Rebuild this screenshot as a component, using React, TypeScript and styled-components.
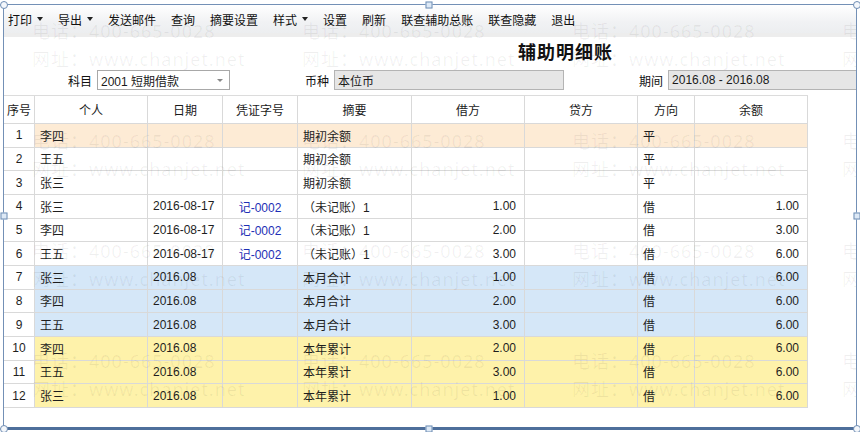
import styled, { createGlobalStyle } from "styled-components";

const GlobalStyle = createGlobalStyle`
  html, body {
    margin: 0;
    padding: 0;
    background: #ffffff;
  }
  body {
    font-family: "Liberation Sans", "Noto Sans CJK SC", sans-serif;
    font-size: 12px;
    color: #1e1e1e;
  }
`;

type Tone = "plain" | "open" | "month" | "year";

interface Line {
  no: number;
  person: string;
  date: string;
  voucher: string;
  summary: string;
  debit: string;
  credit: string;
  dir: string;
  balance: string;
  tone: Tone;
}

const lines: Line[] = [
  { no: 1, person: "李四", date: "", voucher: "", summary: "期初余额", debit: "", credit: "", dir: "平", balance: "", tone: "open" },
  { no: 2, person: "王五", date: "", voucher: "", summary: "期初余额", debit: "", credit: "", dir: "平", balance: "", tone: "plain" },
  { no: 3, person: "张三", date: "", voucher: "", summary: "期初余额", debit: "", credit: "", dir: "平", balance: "", tone: "plain" },
  { no: 4, person: "张三", date: "2016-08-17", voucher: "记-0002", summary: "（未记账）1", debit: "1.00", credit: "", dir: "借", balance: "1.00", tone: "plain" },
  { no: 5, person: "李四", date: "2016-08-17", voucher: "记-0002", summary: "（未记账）1", debit: "2.00", credit: "", dir: "借", balance: "3.00", tone: "plain" },
  { no: 6, person: "王五", date: "2016-08-17", voucher: "记-0002", summary: "（未记账）1", debit: "3.00", credit: "", dir: "借", balance: "6.00", tone: "plain" },
  { no: 7, person: "张三", date: "2016.08", voucher: "", summary: "本月合计", debit: "1.00", credit: "", dir: "借", balance: "6.00", tone: "month" },
  { no: 8, person: "李四", date: "2016.08", voucher: "", summary: "本月合计", debit: "2.00", credit: "", dir: "借", balance: "6.00", tone: "month" },
  { no: 9, person: "王五", date: "2016.08", voucher: "", summary: "本月合计", debit: "3.00", credit: "", dir: "借", balance: "6.00", tone: "month" },
  { no: 10, person: "李四", date: "2016.08", voucher: "", summary: "本年累计", debit: "2.00", credit: "", dir: "借", balance: "6.00", tone: "year" },
  { no: 11, person: "王五", date: "2016.08", voucher: "", summary: "本年累计", debit: "3.00", credit: "", dir: "借", balance: "6.00", tone: "year" },
  { no: 12, person: "张三", date: "2016.08", voucher: "", summary: "本年累计", debit: "1.00", credit: "", dir: "借", balance: "6.00", tone: "year" },
];

const toneBg: Record<Tone, string> = {
  plain: "#ffffff",
  open: "#fdebd5",
  month: "#d5e7f8",
  year: "#fef2aa",
};

const menu: { label: string; drop?: boolean }[] = [
  { label: "打印", drop: true },
  { label: "导出", drop: true },
  { label: "发送邮件" },
  { label: "查询" },
  { label: "摘要设置" },
  { label: "样式", drop: true },
  { label: "设置" },
  { label: "刷新" },
  { label: "联查辅助总账" },
  { label: "联查隐藏" },
  { label: "退出" },
];

const headers = ["序号", "个人", "日期", "凭证字号", "摘要", "借方", "贷方", "方向", "余额"];

const Page = styled.div`
  position: relative;
  width: 860px;
  height: 432px;
  overflow: hidden;
  padding: 4px 0 0 3px;
  box-sizing: border-box;
`;

const Frame = styled.div`
  position: relative;
  width: 854px;
  height: 426px;
  box-sizing: border-box;
  border: 1px solid #7390b6;
  border-bottom: 3px solid #4e6f9b;
  overflow: hidden;
  background: #ffffff;
`;

const Toolbar = styled.div`
  display: flex;
  align-items: center;
  height: 28px;
  padding-left: 4px;
  background: linear-gradient(#ffffff, #f1f2f4 60%, #eceef0);
  border-bottom: 4px solid #ededed;
`;

const MenuItem = styled.div`
  display: flex;
  align-items: center;
  padding-right: 15px;
  font-family: "Noto Sans CJK SC", sans-serif;
  font-size: 12px;
  color: #111;
  white-space: nowrap;
`;

const Caret = styled.span`
  margin-left: 5px;
  width: 0;
  height: 0;
  border-left: 3.5px solid transparent;
  border-right: 3.5px solid transparent;
  border-top: 4px solid #222;
`;

const TitleRow = styled.div`
  height: 29px;
  padding-left: 514px;
  font-family: "Noto Sans CJK SC", sans-serif;
  font-weight: 700;
  font-size: 18px;
  letter-spacing: 1px;
  line-height: 29px;
  color: #111;
`;

const FormRow = styled.div`
  display: flex;
  align-items: center;
  gap: 75px;
  height: 20px;
  padding: 4px 0 5px 64px;
`;

const Field = styled.label`
  display: flex;
  align-items: center;
  gap: 5px;
  font-family: "Noto Sans CJK SC", sans-serif;
  font-size: 12px;
  color: #111;
  white-space: nowrap;
`;

const Box = styled.div<{ $w: number; $disabled?: boolean }>`
  position: relative;
  display: flex;
  align-items: center;
  width: ${(p) => p.$w}px;
  height: 20px;
  box-sizing: border-box;
  padding-left: 3px;
  border: 1px solid ${(p) => (p.$disabled ? "#b4b4b4" : "#a8a8a8")};
  background: ${(p) => (p.$disabled ? "#e6e6e6" : "#ffffff")};
  font-family: "Liberation Sans", "Noto Sans CJK SC", sans-serif;
  font-size: 12px;
  color: #1a1a1a;
  flex-shrink: 0;
`;

const SelectArrow = styled.span`
  position: absolute;
  right: 6px;
  top: 8px;
  width: 0;
  height: 0;
  border-left: 3px solid transparent;
  border-right: 3px solid transparent;
  border-top: 3px solid #888;
`;

const Grid = styled.div`
  display: flex;
  flex-direction: column;
  width: 804px;
`;

const Row = styled.div<{ $h: number }>`
  display: grid;
  grid-template-columns: 31px 113px 75px 75px 114px 113px 113px 57px 113px;
  height: ${(p) => p.$h}px;
`;

const HeadRow = styled(Row)`
  border-top: 1px solid #dcdcdc;
`;

const Cell = styled.div<{ $align?: "left" | "center" | "right"; $bg?: string; $blue?: boolean }>`
  display: flex;
  align-items: center;
  justify-content: ${(p) =>
    p.$align === "center" ? "center" : p.$align === "right" ? "flex-end" : "flex-start"};
  padding: 0 ${(p) => (p.$align === "right" ? "8px" : "0")} 0
    ${(p) => (p.$align === "left" ? "5px" : "0")};
  border-right: 1px solid #d9d9d9;
  border-bottom: 1px solid #d9d9d9;
  background: ${(p) => p.$bg || "#ffffff"};
  color: ${(p) => (p.$blue ? "#1d2fb5" : "#1e1e1e")};
  font-size: 12px;
  white-space: nowrap;
  overflow: hidden;
`;

const HeadCell = styled(Cell)`
  justify-content: center;
  padding: 0;
  color: #1a1a1a;
`;

const Watermark = styled.div`
  position: absolute;
  inset: 0;
  padding: 12px 0 0 28px;
  display: grid;
  grid-template-columns: repeat(4, 270px);
  grid-auto-rows: 110px;
  pointer-events: none;
  overflow: hidden;
`;

const Stamp = styled.div`
  display: flex;
  flex-direction: column;
  font-family: "Noto Sans", "Noto Sans CJK SC", sans-serif;
  font-size: 18px;
  letter-spacing: 1px;
  line-height: 28px;
  color: rgba(0, 0, 0, 0.06);
  white-space: nowrap;
`;

const Handle = styled.span<{ $round?: boolean }>`
  position: absolute;
  width: ${(p) => (p.$round ? 8 : 7)}px;
  height: ${(p) => (p.$round ? 8 : 7)}px;
  box-sizing: border-box;
  border: 1px solid #6f8db3;
  border-radius: ${(p) => (p.$round ? "50%" : "0")};
  background: ${(p) => (p.$round ? "#f4f7fb" : "#dde9f6")};
  transform: translate(-50%, -50%);
`;

const handles: { x: number; y: number; round?: boolean }[] = [
  { x: 3.5, y: 4.5, round: true },
  { x: 429, y: 4.5 },
  { x: 856.5, y: 4.5, round: true },
  { x: 3.5, y: 216 },
  { x: 856.5, y: 216 },
  { x: 3.5, y: 428.5, round: true },
  { x: 429, y: 428.5 },
  { x: 856.5, y: 428.5, round: true },
];

export default function App() {
  return (
    <>
      <GlobalStyle />
      <Page>
        <Frame>
          <Toolbar>
            {menu.map((m) => (
              <MenuItem key={m.label}>
                {m.label}
                {m.drop && <Caret />}
              </MenuItem>
            ))}
          </Toolbar>
          <TitleRow>辅助明细账</TitleRow>
          <FormRow>
            <Field>
              科目
              <Box $w={133}>
                2001 短期借款
                <SelectArrow />
              </Box>
            </Field>
            <Field>
              币种
              <Box $w={230} $disabled>
                本位币
              </Box>
            </Field>
            <Field>
              期间
              <Box $w={200} $disabled>
                2016.08 - 2016.08
              </Box>
            </Field>
          </FormRow>
          <Grid>
            <HeadRow $h={28}>
              {headers.map((h) => (
                <HeadCell key={h}>{h}</HeadCell>
              ))}
            </HeadRow>
            {lines.map((l) => {
              const bg = toneBg[l.tone];
              return (
                <Row key={l.no} $h={23.67}>
                  <Cell $align="center">{l.no}</Cell>
                  <Cell $align="left" $bg={bg}>{l.person}</Cell>
                  <Cell $align="left" $bg={bg}>{l.date}</Cell>
                  <Cell $align="center" $bg={bg} $blue>{l.voucher}</Cell>
                  <Cell $align="left" $bg={bg}>{l.summary}</Cell>
                  <Cell $align="right" $bg={bg}>{l.debit}</Cell>
                  <Cell $align="right" $bg={bg}>{l.credit}</Cell>
                  <Cell $align="left" $bg={bg}>{l.dir}</Cell>
                  <Cell $align="right" $bg={bg}>{l.balance}</Cell>
                </Row>
              );
            })}
          </Grid>
          <Watermark>
            {Array.from({ length: 16 }).map((_, i) => (
              <Stamp key={i}>
                <span>电话：400-665-0028</span>
                <span>网址：www.chanjet.net</span>
              </Stamp>
            ))}
          </Watermark>
        </Frame>
        {handles.map((h, i) => (
          <Handle key={i} $round={h.round} style={{ left: h.x, top: h.y }} />
        ))}
      </Page>
    </>
  );
}
